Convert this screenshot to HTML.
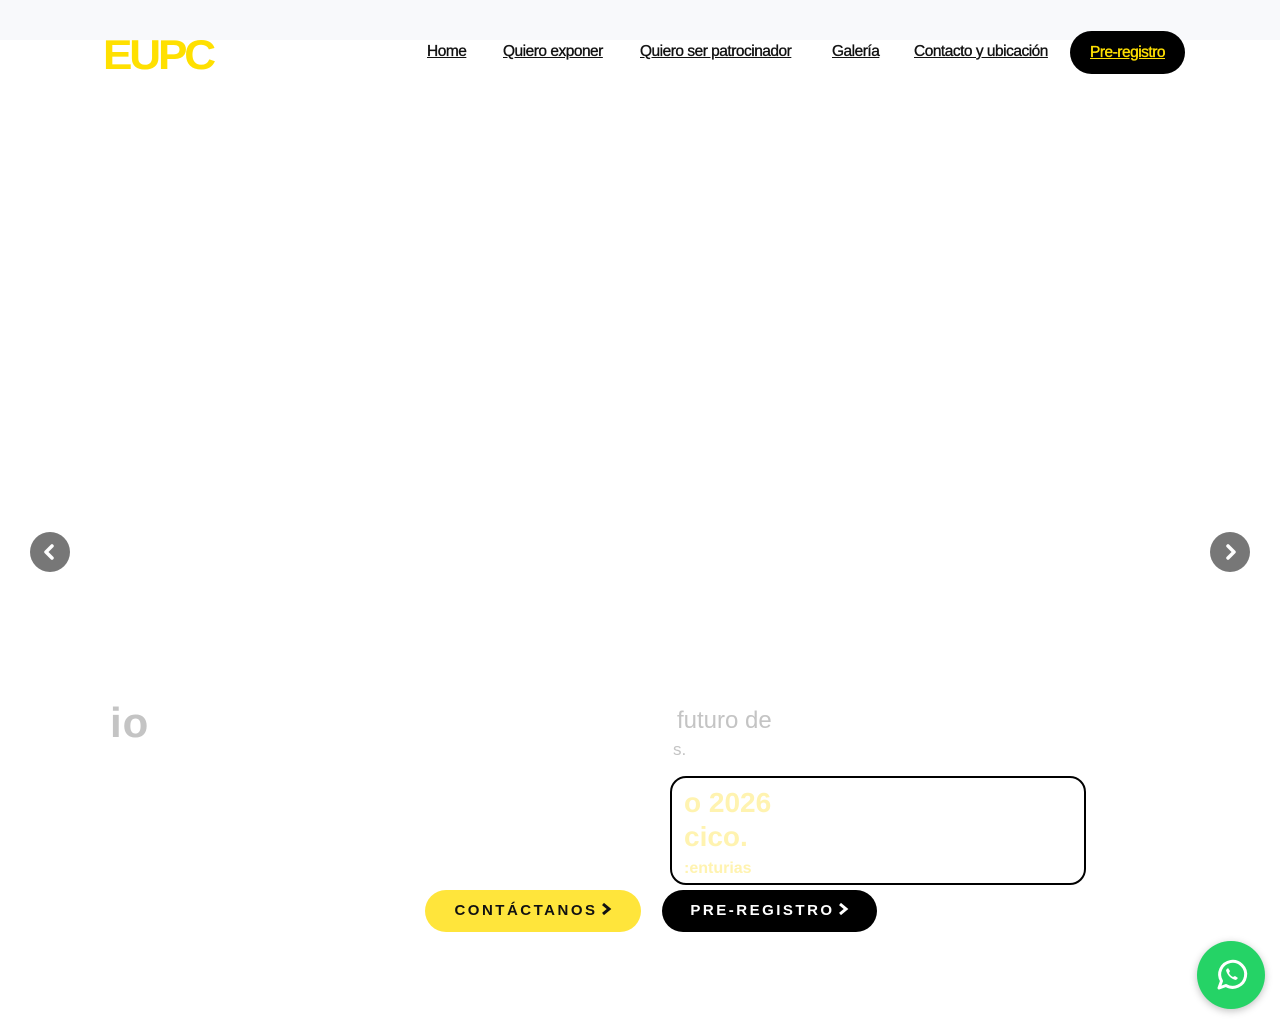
<!DOCTYPE html>
<html><head><meta charset="utf-8">
<style>
*{margin:0;padding:0;box-sizing:border-box}
body{width:1280px;height:1024px;background:#fff;position:relative;overflow:hidden;font-family:"Liberation Sans",sans-serif}
.top{position:absolute;left:0;top:0;width:1280px;height:40px;background:#f8f9fb}
.logo{position:absolute;left:103px;top:31px;font-size:42px;font-weight:900;color:#ffe000;letter-spacing:-3px;transform:scaleX(1.05);transform-origin:left}
.nav a{position:absolute;top:43px;font-size:15.5px;color:#111;text-decoration:underline;letter-spacing:-0.5px;-webkit-text-stroke:0.35px #111}
.pre{position:absolute;left:1070px;top:31px;width:115px;height:43px;background:#000;border-radius:22px;color:#ffe000;font-size:15.5px;text-align:center;line-height:43px;text-decoration:underline;letter-spacing:-0.5px;-webkit-text-stroke:0.35px #ffe000}
.arr{position:absolute;top:532px;width:40px;height:40px;border-radius:50%;background:#777}
.arr svg{position:absolute;left:0;top:0}
.gray{position:absolute;color:#c4c4c4}
.box{position:absolute;left:670px;top:776px;width:416px;height:109px;border:2px solid #000;border-radius:16px}
.y{position:absolute;color:#fff3b0;font-weight:bold}
.btn{position:absolute;top:890px;height:42px;border-radius:21px;font-size:15px;font-weight:bold;letter-spacing:2.5px;text-align:center;line-height:42px}
.btn svg{vertical-align:-1px;margin-left:2px}
.wa{position:absolute;left:1197px;top:941px;width:68px;height:68px;border-radius:50%;background:#25d366;box-shadow:0 2px 8px rgba(0,0,0,.25)}
</style></head><body>
<div class="top"></div>
<div class="logo">EUPC</div>
<div class="nav">
<a style="left:427px">Home</a>
<a style="left:503px">Quiero exponer</a>
<a style="left:640px">Quiero ser patrocinador</a>
<a style="left:832px">Galería</a>
<a style="left:914px">Contacto y ubicación</a>
</div>
<div class="pre">Pre-registro</div>
<div class="arr" style="left:30px"><svg width="40" height="40"><path d="M22 14l-6 6 6 6" fill="none" stroke="#fff" stroke-width="3.5" stroke-linecap="round" stroke-linejoin="round"/></svg></div>
<div class="arr" style="left:1210px"><svg width="40" height="40"><path d="M18 14l6 6-6 6" fill="none" stroke="#fff" stroke-width="3.5" stroke-linecap="round" stroke-linejoin="round"/></svg></div>
<div class="gray" style="left:110px;top:699px;font-size:42px;font-weight:bold;letter-spacing:1px">io</div>
<div class="gray" style="left:677px;top:707px;font-size:24px">futuro de</div>
<div class="gray" style="left:673px;top:740px;font-size:17px">s.</div>
<div class="box"></div>
<div class="y" style="left:684px;top:787px;font-size:28px">o 2026</div>
<div class="y" style="left:684px;top:821px;font-size:28px">cico.</div>
<div class="y" style="left:684px;top:860px;font-size:16px">:enturias</div>
<div class="btn" style="left:425px;width:216px;background:#ffe53b;color:#111">CONTÁCTANOS<svg width="12" height="14"><path d="M3 2l6 5-6 5" fill="none" stroke="#111" stroke-width="3"/></svg></div>
<div class="btn" style="left:662px;width:215px;background:#000;color:#fff">PRE-REGISTRO<svg width="12" height="14"><path d="M3 2l6 5-6 5" fill="none" stroke="#fff" stroke-width="3"/></svg></div>
<div class="wa"><svg width="68" height="68" viewBox="0 0 68 68"><path d="M22 47l2.5-7A13 13 0 1 1 29 44.5z" fill="none" stroke="#fff" stroke-width="3" stroke-linejoin="round"/><path d="M29 29c1 5 5 9 10 10l2-2-3-2-2 1c-2-1-3-2-4-4l1-2-2-3z" fill="#fff"/></svg></div>
</body></html>
